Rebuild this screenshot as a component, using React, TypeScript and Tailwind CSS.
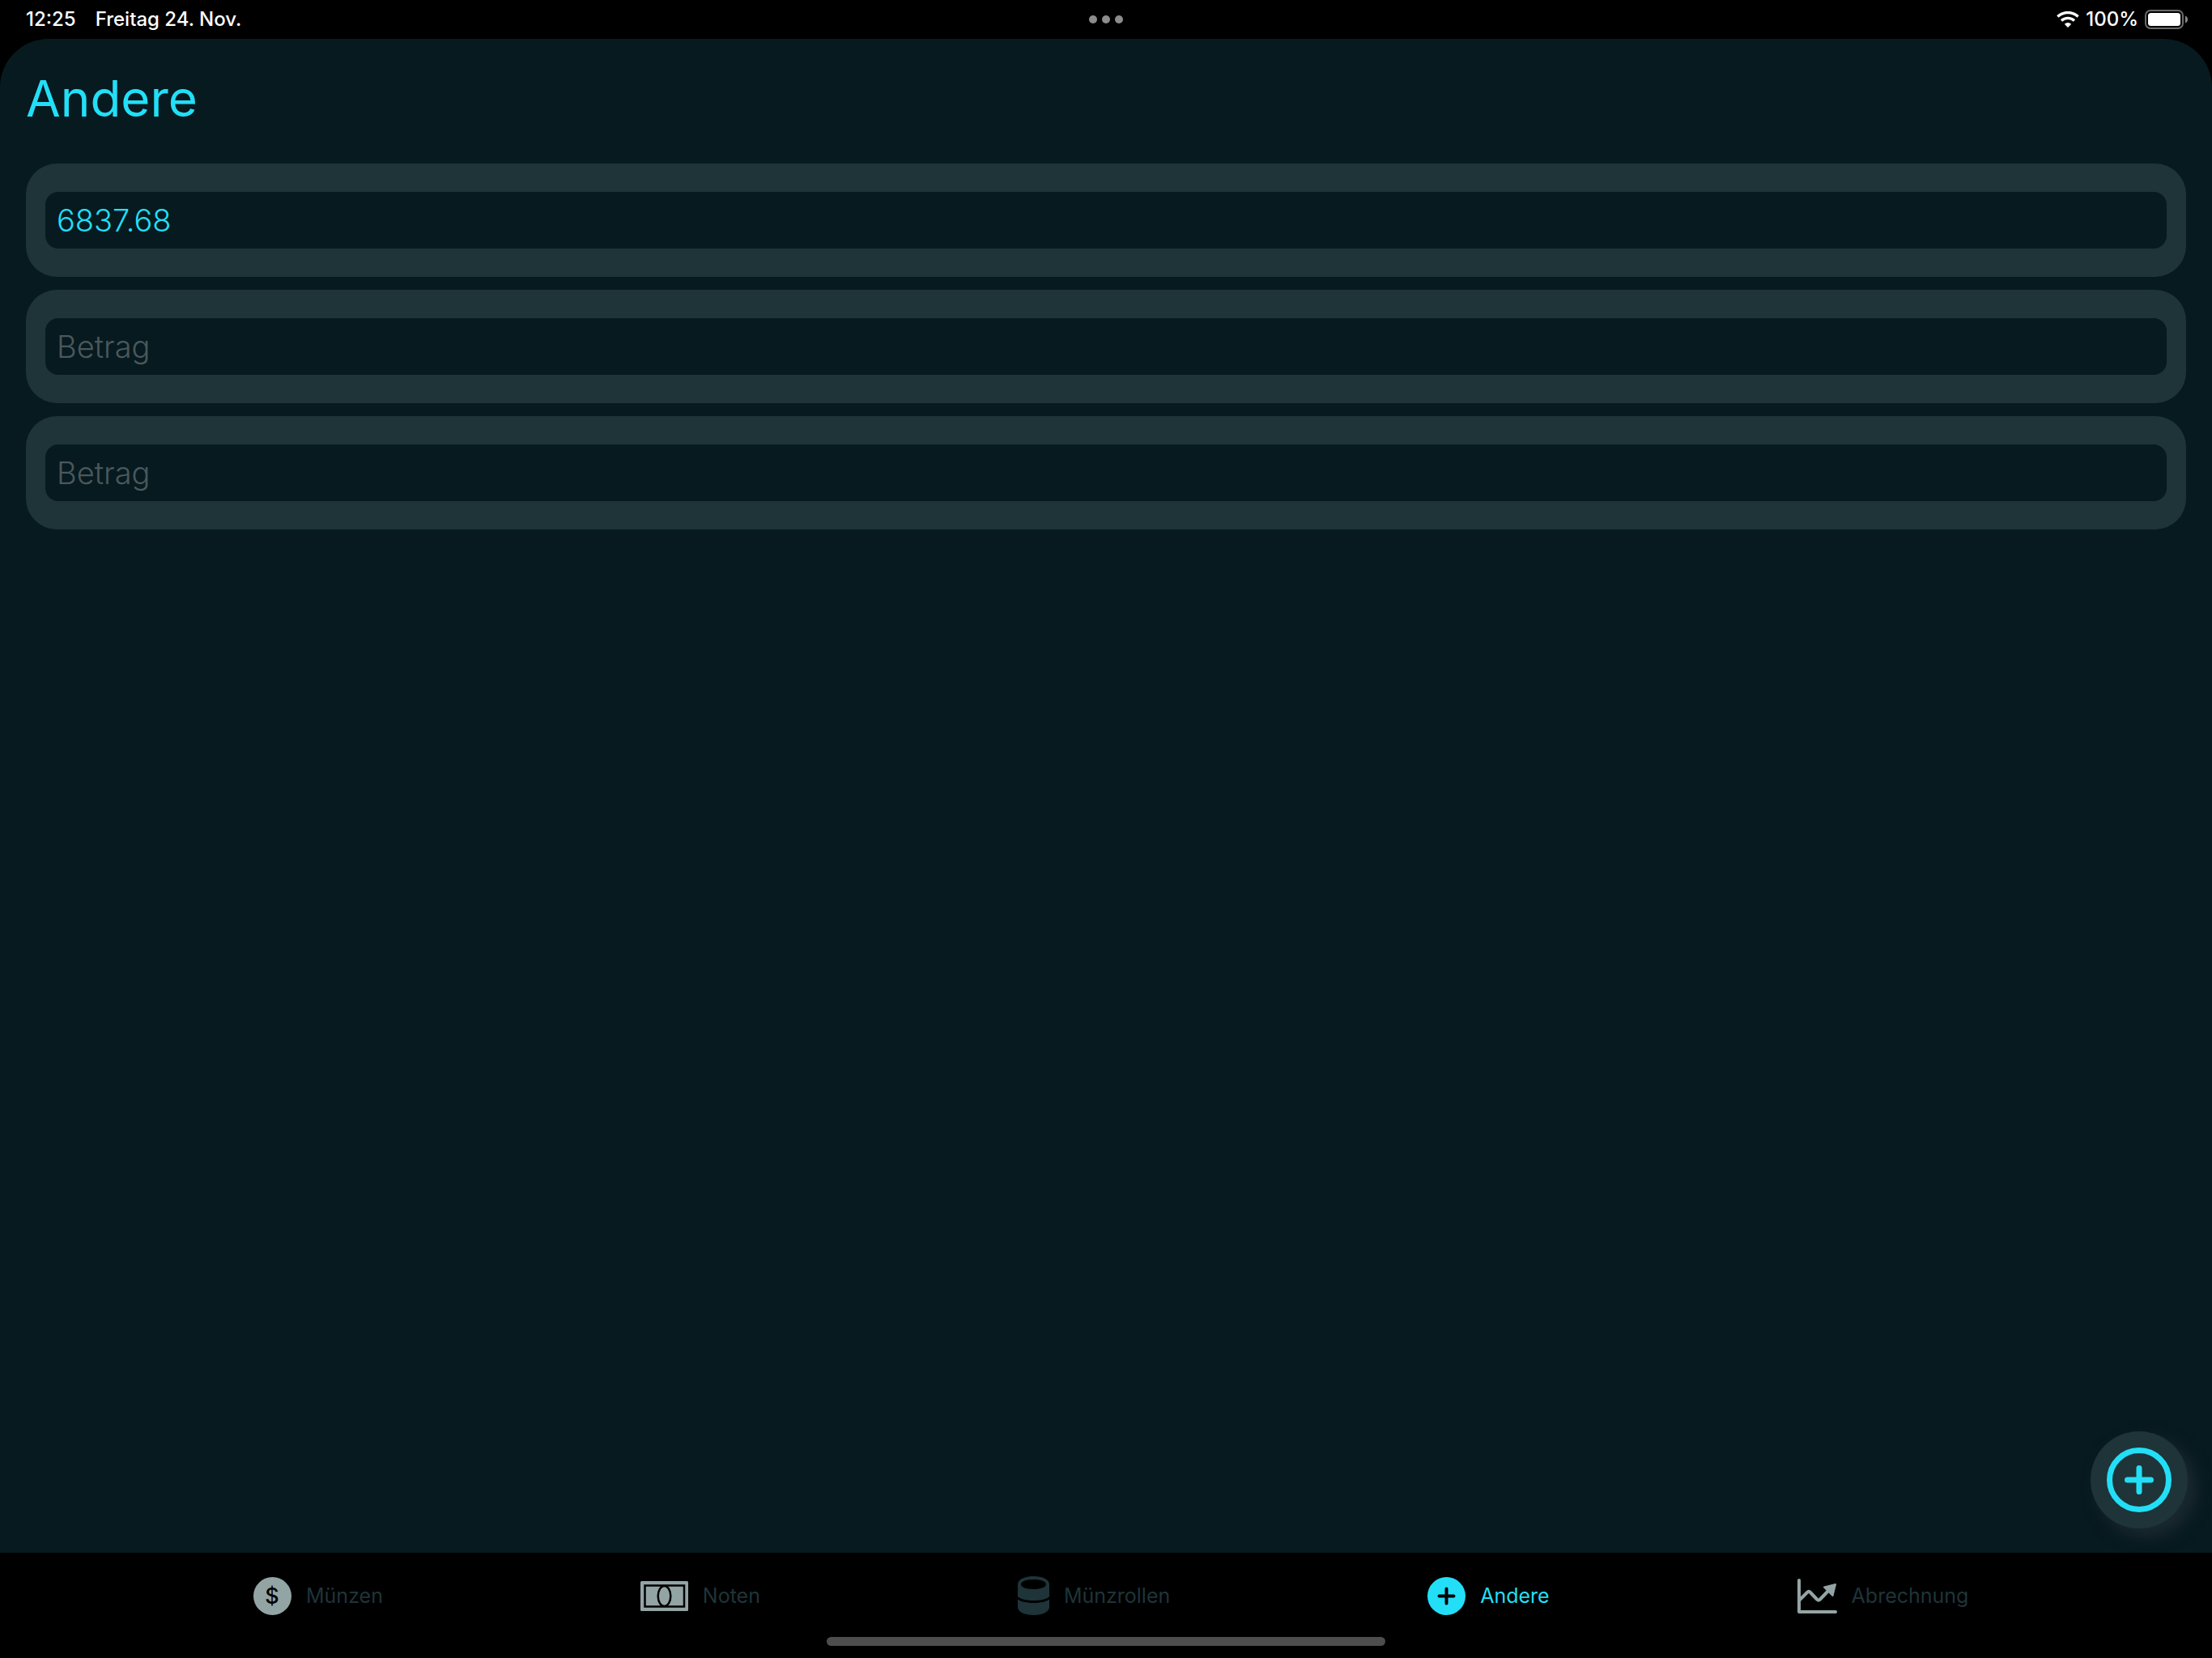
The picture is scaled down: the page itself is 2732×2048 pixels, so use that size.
import { useState, type ReactNode } from "react";

function WifiIcon() {
  return (
    <svg viewBox="0 0 28 20" className="h-5 w-7" aria-hidden="true">
      <g fill="none" stroke="currentColor" strokeWidth="3.4">
        <path d="M1.4 6.6a18.2 18.2 0 0 1 25.2 0" />
        <path d="M6 11.6a11.6 11.6 0 0 1 16 0" />
      </g>
      <path fill="currentColor" d="M14 20l-4.2-4.3a6 6 0 0 1 8.4 0z" />
    </svg>
  );
}

function BatteryIcon() {
  return (
    <svg viewBox="0 0 53 24" className="h-6 w-[53px]" aria-hidden="true">
      <rect x="1" y="1" width="46" height="22" rx="6" fill="none" stroke="#6b6b6b" strokeWidth="2" />
      <rect x="4" y="4" width="40" height="16" rx="3.5" fill="#fff" />
      <path d="M50 7.5c1.8.9 3 2.400 3 4.500s-1.200 3.600-3 4.500z" fill="#8a8a8a" />
    </svg>
  );
}

function CoinIcon() {
  return (
    <svg viewBox="0 0 47 47" className="size-[47px]" aria-hidden="true">
      <circle cx="23.5" cy="23.5" r="23.5" fill="#93a4a4" />
      <text
        x="23"
        y="33"
        textAnchor="middle"
        fill="#000"
        fontFamily="Inter, sans-serif"
        fontSize="27"
        fontWeight="500"
      >
        $
      </text>
    </svg>
  );
}

function NoteIcon() {
  return (
    <svg viewBox="0 0 59 37" className="h-[37px] w-[59px]" aria-hidden="true">
      <rect width="59" height="37" rx="1.5" fill="#93a4a4" />
      <g fill="none" stroke="#000" strokeWidth="2.5">
        <rect x="5.5" y="5.5" width="48.5" height="26" />
        <ellipse cx="29.5" cy="18.5" rx="7.8" ry="12.5" />
      </g>
    </svg>
  );
}

function RollIcon() {
  return (
    <svg viewBox="0 0 39 48" className="h-12 w-[39px]" aria-hidden="true">
      <path
        fill="#1e3439"
        fillRule="evenodd"
        d="M0 10C0 4 8 0 19.5 0S39 4 39 10v15c-3 3.2-10 5-19.5 5S3 28.2 0 25zM4 10c0 3.5 6.5 6 15.5 6S35 13.5 35 10s-6.5-6-15.5-6S4 6.5 4 10z"
      />
      <path fill="#1e3439" d="M0 28.5c4 3 11 4.5 19.5 4.5S35 31.5 39 28.5V38c0 6-8 10-19.5 10S0 44 0 38z" />
    </svg>
  );
}

function PlusDiscIcon() {
  return (
    <svg viewBox="0 0 47 47" className="size-[47px]" aria-hidden="true">
      <circle cx="23.5" cy="23.5" r="23.5" fill="#22dff7" />
      <path d="M14.5 23.5h18M23.5 14.5v18" stroke="#000" strokeWidth="4" strokeLinecap="round" />
    </svg>
  );
}

function ChartIcon() {
  return (
    <svg viewBox="0 0 49 43" className="h-[43px] w-[49px]" aria-hidden="true">
      <g fill="none" stroke="#93a4a4" strokeLinecap="round" strokeLinejoin="round">
        <path d="M2 2v39h45" strokeWidth="4" />
        <path d="M3 26L12.5 16.5q1.5-1.2 3 0L24.5 26q1.5 1.2 3 0L39 14" strokeWidth="4" />
      </g>
      <path
        d="M33 10.5L47 7l-3.5 14z"
        fill="#93a4a4"
        stroke="#93a4a4"
        strokeWidth="2"
        strokeLinejoin="round"
      />
    </svg>
  );
}

type Tab = { label: string; icon: ReactNode; active?: boolean };

const tabs: Tab[] = [
  { label: "Münzen", icon: <CoinIcon /> },
  { label: "Noten", icon: <NoteIcon /> },
  { label: "Münzrollen", icon: <RollIcon /> },
  { label: "Andere", icon: <PlusDiscIcon />, active: true },
  { label: "Abrechnung", icon: <ChartIcon /> },
];

export default function App() {
  const [amounts, setAmounts] = useState(["6837.68", "", ""]);

  return (
    <div className="flex min-h-screen flex-col bg-black font-['Inter',sans-serif]">
      <header className="grid h-12 grid-cols-3 items-center px-[30px] text-[24px] leading-8 font-medium text-white">
        <div className="flex gap-6 pl-0.5">
          <span>12:25</span>
          <span>Freitag 24. Nov.</span>
        </div>
        <div className="flex justify-center gap-1.5">
          <span className="size-2.5 rounded-full bg-[#8c8c8c]" />
          <span className="size-2.5 rounded-full bg-[#8c8c8c]" />
          <span className="size-2.5 rounded-full bg-[#8c8c8c]" />
        </div>
        <div className="flex items-center justify-end gap-2">
          <WifiIcon />
          <span>100%</span>
          <BatteryIcon />
        </div>
      </header>

      <main className="relative flex-1 rounded-t-[60px] bg-[#071a1f] px-8">
        <h1 className="pt-[34px] pb-10 text-[62px] leading-[80px] text-[#22dff7]">Andere</h1>
        <div className="flex flex-col gap-4">
          {amounts.map((amount, i) => (
            <div key={i} className="rounded-[38px] bg-[#1e3438] px-6 py-[35px]">
              <input
                type="text"
                inputMode="decimal"
                aria-label={`Betrag ${i + 1}`}
                placeholder="Betrag"
                value={amount}
                onChange={(e) => setAmounts(amounts.map((a, j) => (j === i ? e.target.value : a)))}
                className="block h-[70px] w-full rounded-2xl bg-[#071a1f] px-3.5 text-[38px] font-light text-[#22dff7] outline-none placeholder:text-[#4a585c]"
              />
            </div>
          ))}
        </div>
        <button
          type="button"
          aria-label="Betrag hinzufügen"
          onClick={() => setAmounts([...amounts, ""])}
          className="absolute right-[30px] bottom-[30px] flex size-[120px] items-center justify-center rounded-full bg-[#1e3438] shadow-[10px_10px_20px_#1c2a30]"
        >
          <svg viewBox="0 0 80 80" className="size-20" fill="none" stroke="#22dff7" strokeWidth="7" strokeLinecap="round" aria-hidden="true">
            <circle cx="40" cy="40" r="36.5" />
            <path d="M25.5 40h29M40 25.5v29" />
          </svg>
        </button>
      </main>

      <footer className="relative z-10 flex h-[130px] flex-col items-center justify-between bg-black pt-[29px] pb-[15px]">
        <nav className="flex w-full justify-between pr-[11%] pl-[313px]">
          {tabs.map((tab) => (
            <button
              key={tab.label}
              type="button"
              aria-current={tab.active ? "page" : undefined}
              className={
                tab.active
                  ? "flex h-12 items-center gap-[18px] text-[25px] leading-8 text-[#22dff7]"
                  : "flex h-12 items-center gap-[18px] pr-3 text-[25px] leading-8 text-[#1e3439] last:pr-0"
              }
            >
              {tab.icon}
              <span>{tab.label}</span>
            </button>
          ))}
        </nav>
        <div className="h-[11px] w-[690px] rounded-full bg-[#4d4d4d]" />
      </footer>
    </div>
  );
}
